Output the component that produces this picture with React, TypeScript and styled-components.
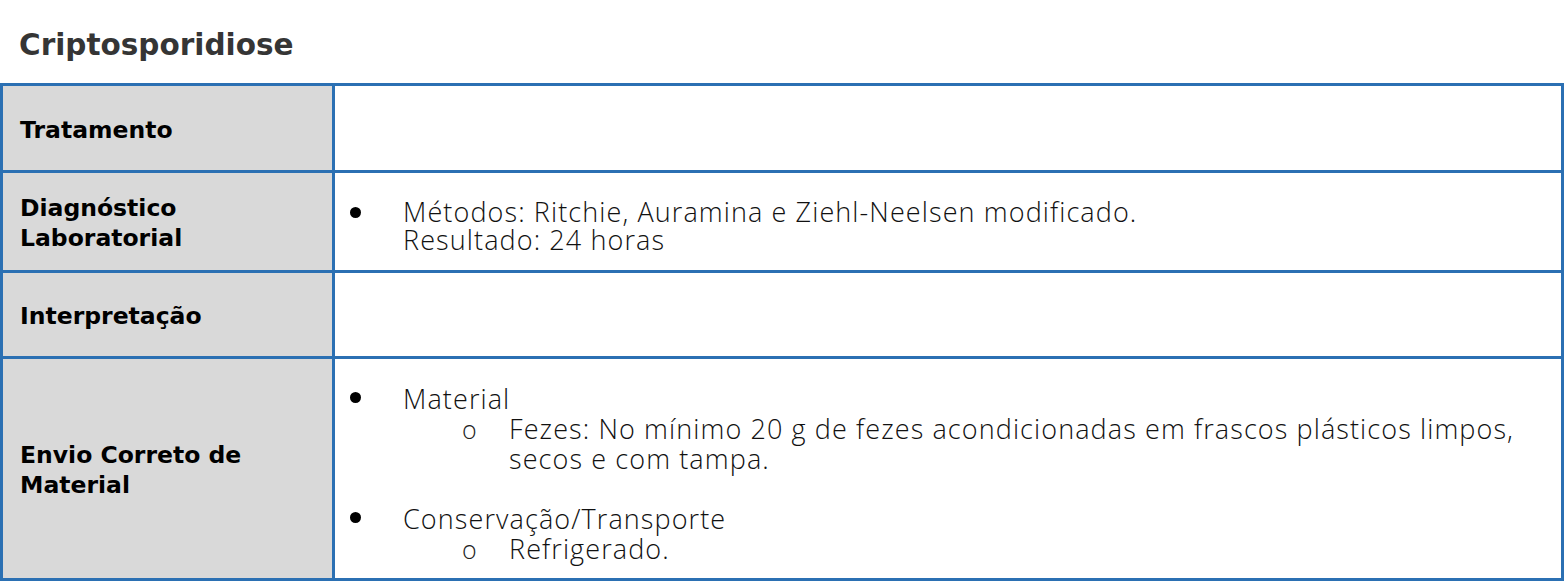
import styled, { createGlobalStyle } from "styled-components";

const GlobalStyle = createGlobalStyle`
  html, body {
    margin: 0;
    padding: 0;
    background: #ffffff;
  }
`;

const Page = styled.div`
  width: 1564px;
  height: 582px;
  overflow: hidden;
`;

const Title = styled.h1`
  margin: 0;
  height: 83px;
  padding: 27px 0 0 19px;
  box-sizing: border-box;

  font-family: "DejaVu Sans", sans-serif;
  font-weight: bold;
  font-size: 29.5px;
  line-height: 36px;
  color: #353535;
`;

const Table = styled.div`
  border: 3px solid #2b70b3;
  display: flex;
  flex-direction: column;
`;

const Row = styled.div<{ $height: number; $last?: boolean }>`
  display: grid;
  grid-template-columns: 332px 1fr;
  height: ${(p) => p.$height}px;
  box-sizing: border-box;
  border-bottom: ${(p) => (p.$last ? "none" : "3px solid #2b70b3")};
`;

const Label = styled.div`
  display: flex;
  align-items: center;
  padding: 3px 0 0 17px;

  background-color: #d9d9d9;
  border-right: 3px solid #2b70b3;

  font-family: "DejaVu Sans", sans-serif;
  font-weight: bold;
  font-size: 23.5px;
  line-height: 30px;
  color: #000000;
`;

const Content = styled.div<{ $top?: number }>`
  display: flex;
  flex-direction: column;
  justify-content: center;
  padding: ${(p) => p.$top ?? 9}px 30px 0 15px;

  font-family: "Open Sans", sans-serif;
  font-weight: 300;
  font-size: 27px;
  letter-spacing: 1.1px;
  color: #111111;
`;

const Item = styled.div<{ $lineHeight: number }>`
  display: grid;
  grid-template-columns: 53px 1fr;
  line-height: ${(p) => p.$lineHeight}px;
`;

const Bullet = styled.span`
  display: flex;
  align-items: center;
  height: 28px;

  &::before {
    content: "";
    width: 11px;
    height: 11px;
    border-radius: 50%;
    background: #000000;
  }
`;

const SubItem = styled.div`
  display: grid;
  grid-template-columns: 59px 47px 1fr;
  align-items: baseline;
`;

const SubBullet = styled.span`
  grid-column: 2;
  font-size: 25px;
  font-weight: 300;
  letter-spacing: 0;
  color: #222222;
`;

const Blank = styled.div`
  height: 30px;
`;

export default function App() {
  return (
    <Page>
      <GlobalStyle />
      <Title>Criptosporidiose</Title>

      <Table>
        <Row $height={87}>
          <Label>Tratamento</Label>
          <Content />
        </Row>

        <Row $height={100}>
          <Label>
            Diagnóstico
            <br />
            Laboratorial
          </Label>
          <Content>
            <Item $lineHeight={28}>
              <Bullet />
              <div>
                Métodos: Ritchie, Auramina e Ziehl-Neelsen modificado.
                <br />
                Resultado: 24 horas
              </div>
            </Item>
          </Content>
        </Row>

        <Row $height={86}>
          <Label>Interpretação</Label>
          <Content />
        </Row>

        <Row $height={219} $last>
          <Label>
            Envio Correto de
            <br />
            Material
          </Label>
          <Content $top={10}>
            <Item $lineHeight={30}>
              <Bullet />
              <div>
                Material
                <SubItem>
                  <SubBullet>o</SubBullet>
                  <div>
                    Fezes: No mínimo 20 g de fezes acondicionadas em frascos plásticos limpos,
                    <br />
                    secos e com tampa.
                  </div>
                </SubItem>
              </div>
            </Item>
            <Blank />
            <Item $lineHeight={30}>
              <Bullet />
              <div>
                Conservação/Transporte
                <SubItem>
                  <SubBullet>o</SubBullet>
                  <div>Refrigerado.</div>
                </SubItem>
              </div>
            </Item>
          </Content>
        </Row>
      </Table>
    </Page>
  );
}
